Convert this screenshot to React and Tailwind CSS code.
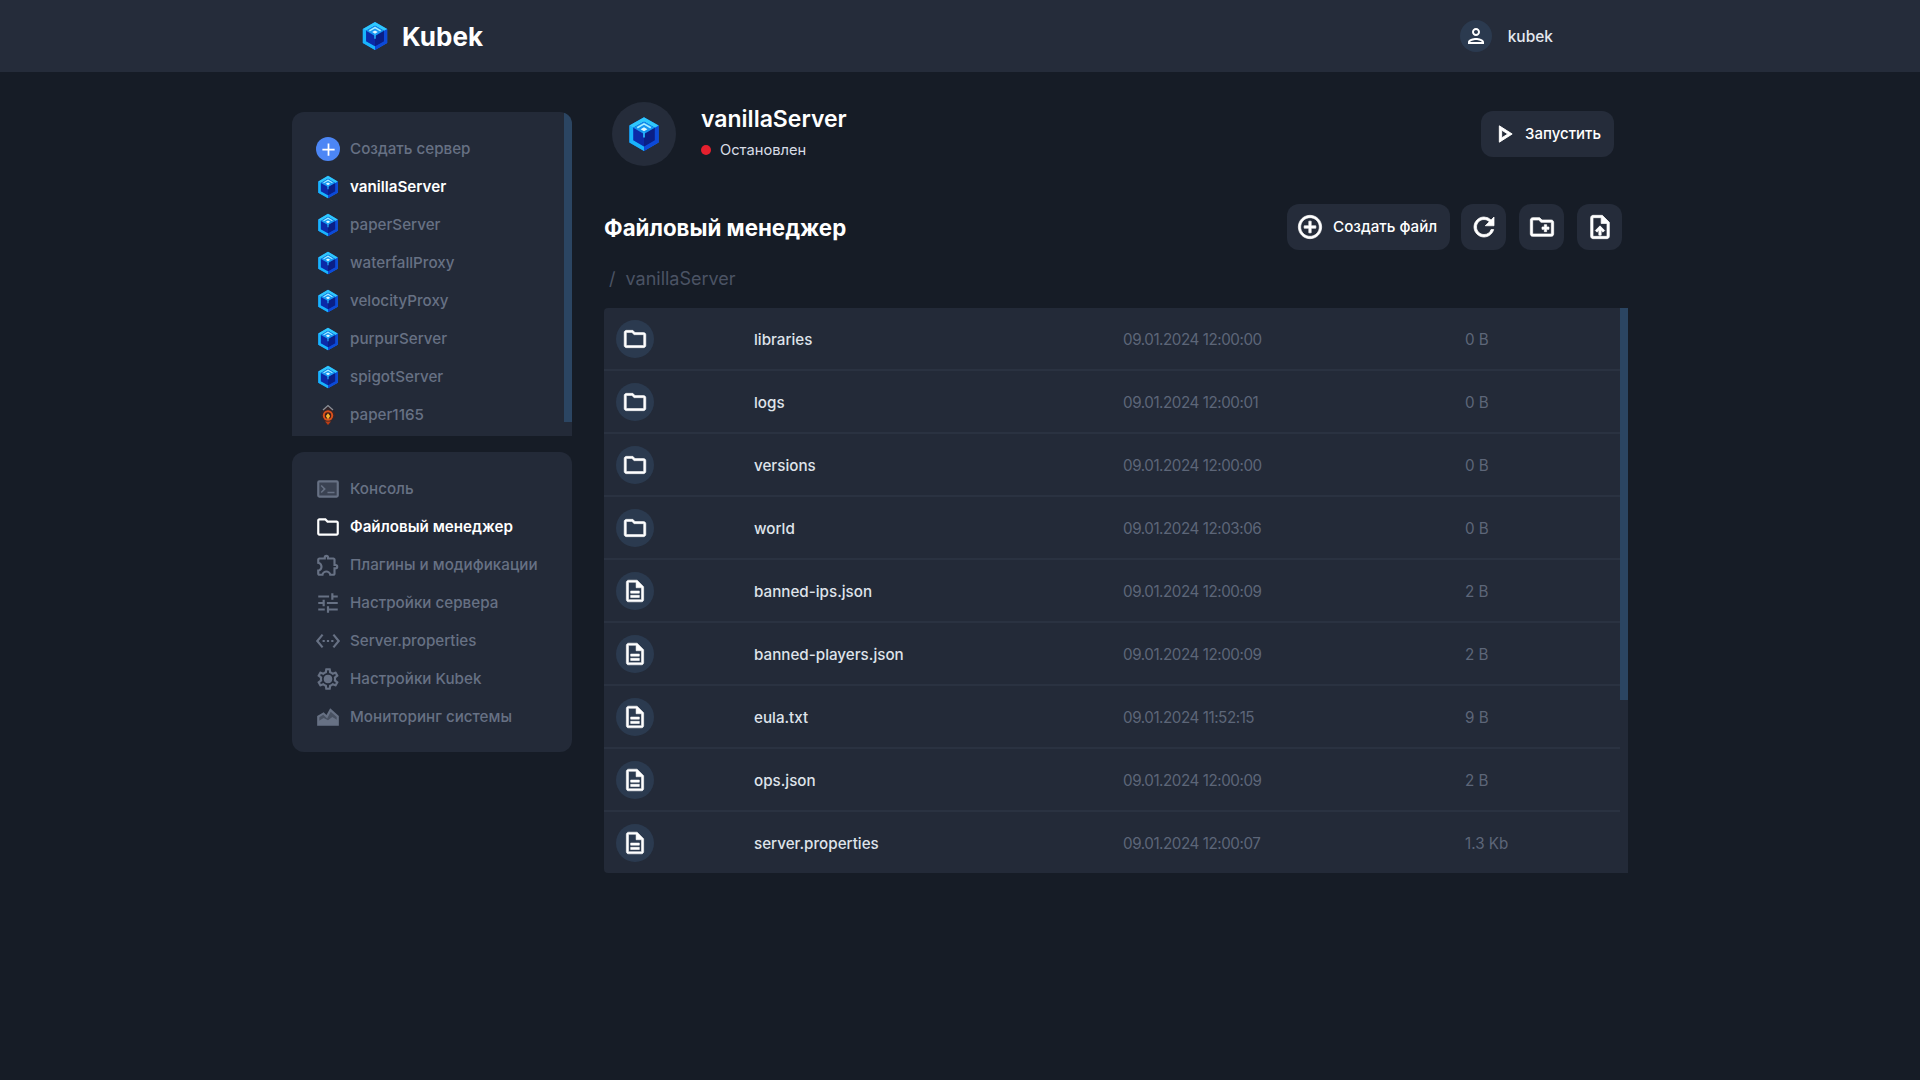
import {
  MdAdd, MdAddCircleOutline, MdOutlineCreateNewFolder, MdOutlineDescription, MdOutlineExtension, MdOutlineFolder,
  MdOutlinePerson, MdOutlinePlayArrow, MdOutlineSettings, MdOutlineUploadFile, MdRefresh, MdSettingsEthernet, MdTune,
} from 'react-icons/md';

const FONT = 'font-["Inter","Liberation_Sans",sans-serif]';
// thickens a material icon without outlining its empty 24x24 box path
const BOLD = '[&_path:first-child]:stroke-none';

const TerminalIcon = ({ size, className }) => (
  <svg width={size} height={size} viewBox="0 0 24 24" className={className} fill="currentColor">
    <path opacity="0.35" d="M3 5h18v14H3z" />
    <path d="M20 4H4a2 2 0 0 0-2 2v12a2 2 0 0 0 2 2h16a2 2 0 0 0 2-2V6a2 2 0 0 0-2-2Zm0 14H4V6h16v12Z" />
    <path d="m6.2 8.3-1 1 2.7 2.7-2.7 2.7 1 1 3.8-3.7Zm5.3 6.2H18V16h-6.5Z" />
  </svg>
);

const SettingsIcon = ({ size, className }) => (
  <span className={`relative inline-flex ${className}`}>
    <MdOutlineSettings size={size} />
    <span className="absolute left-[9px] top-[9px] h-2 w-2 rounded-full bg-current" />
  </span>
);

const MountainIcon = ({ size, className }) => (
  <svg width={size} height={size} viewBox="0 0 24 24" className={className} fill="currentColor">
    <path opacity="0.55" d="M3 18v-6l5-3 3 3 3-6 7 6v6Z" />
    <path d="M2 20V11l6-3.5 2.6 2.6L14 4l8 7v9Zm2-2h16v-6l-5.5-4.8-3.3 6.2L7.6 10 4 12.2Z" />
    <path d="M3 19v-3l5-3 4 2 4-3 5 3v4Z" />
  </svg>
);

const SERVERS = [
  { name: 'vanillaServer', active: true },
  { name: 'paperServer' },
  { name: 'waterfallProxy' },
  { name: 'velocityProxy' },
  { name: 'purpurServer' },
  { name: 'spigotServer' },
];

const MENU = [
  { label: 'Консоль', icon: TerminalIcon },
  { label: 'Файловый менеджер', icon: MdOutlineFolder, active: true },
  { label: 'Плагины и модификации', icon: MdOutlineExtension },
  { label: 'Настройки сервера', icon: MdTune },
  { label: 'Server.properties', icon: MdSettingsEthernet },
  { label: 'Настройки Kubek', icon: SettingsIcon },
  { label: 'Мониторинг системы', icon: MountainIcon },
];

const FILES = [
  { name: 'libraries', date: '09.01.2024 12:00:00', size: '0 B', dir: true },
  { name: 'logs', date: '09.01.2024 12:00:01', size: '0 B', dir: true },
  { name: 'versions', date: '09.01.2024 12:00:00', size: '0 B', dir: true },
  { name: 'world', date: '09.01.2024 12:03:06', size: '0 B', dir: true },
  { name: 'banned-ips.json', date: '09.01.2024 12:00:09', size: '2 B' },
  { name: 'banned-players.json', date: '09.01.2024 12:00:09', size: '2 B' },
  { name: 'eula.txt', date: '09.01.2024 11:52:15', size: '9 B' },
  { name: 'ops.json', date: '09.01.2024 12:00:09', size: '2 B' },
  { name: 'server.properties', date: '09.01.2024 12:00:07', size: '1.3 Kb' },
];

// hexagonal cube logo
function Cube({ size = 24 }) {
  return (
    <svg width={size} height={size} viewBox="0 0 32 32" className="shrink-0">
      <path d="M16 1 29 8.5V23.5L16 31 3 23.5V8.5Z" fill="#0f6ff0" />
      <path d="M3 8.5V23.5L16 31V27L6.5 21.5V10.5Z" fill="#19b4fb" />
      <path d="M29 8.5V23.5L16 31V27L25.5 21.5V10.5Z" fill="#0c49d8" />
      <path d="M16 1 29 8.5 25.5 10.5 16 5 6.5 10.5 3 8.5Z" fill="#2fc8fc" />
      <path d="M16 5 25.5 10.5V21.5L16 27 6.5 21.5V10.5Z" fill="#0b2aa8" />
      <path d="M16 16 25.5 10.5V21.5L16 27Z" fill="#0a1f86" />
      <path d="M16 5 25.5 10.5 16 16 6.5 10.5Z" fill="#1596f2" />
      <path d="M10 10.5 16 7 22 10.5" fill="none" stroke="#a8ecff" strokeWidth="1.5" />
      <path d="M13 11.8 16 10 19 11.8 16 13.6Z" fill="#e0f9ff" />
      <path d="M16 14v5" stroke="#27b5fa" strokeWidth="1.6" />
    </svg>
  );
}

function PaperIcon() {
  return (
    <svg width="24" height="24" viewBox="0 0 24 24" className="shrink-0">
      <path d="M12 3.5 18.5 8 19.5 14 12 22 4.5 14 5.5 8Z" fill="#33262b" />
      <path d="M7 7 12 2.5 17 7" fill="none" stroke="#8d8f96" strokeWidth="1.3" />
      <circle cx="12" cy="12.5" r="5.2" fill="#d9501b" />
      <circle cx="12" cy="12.5" r="3.2" fill="#3a1d1c" />
      <path d="M12 10.2 14.2 13 12 16.4 9.8 13Z" fill="#f9b42f" />
      <path d="M9 18.5h6L12 22Z" fill="#b93e16" />
    </svg>
  );
}

function SideRow({ icon, label, active }) {
  return (
    <div className="flex h-[38px] items-center pl-[23px]">
      <div className="flex w-[26px] shrink-0 justify-center">{icon}</div>
      <span className={`ml-[9px] text-[15.2px] ${active ? 'font-semibold text-white' : 'font-medium text-[#677184]'}`}>{label}</span>
    </div>
  );
}

function IconBtn({ icon: Icon, size = 28 }) {
  return (
    <button className="flex h-[46px] w-[45px] items-center justify-center rounded-xl bg-[#252c3a] text-white">
      <Icon size={size} stroke="currentColor" strokeWidth={0.6} className={BOLD} />
    </button>
  );
}

export default function App() {
  return (
    <div className={`min-h-screen bg-[#161c26] ${FONT}`}>
      <header className="flex h-[72px] items-center justify-between bg-[#252c3a] pl-[360px] pr-[367px]">
        <div className="flex items-center gap-[12px]">
          <Cube size={30} />
          <span className="text-[26px] font-bold text-white">Kubek</span>
        </div>
        <div className="flex items-center gap-4">
          <div className="flex h-8 w-8 items-center justify-center rounded-full bg-[#2b3a4f] text-white">
            <MdOutlinePerson size={24} />
          </div>
          <span className="pt-[2px] text-[15.5px] font-medium text-[#e4e8ef]">kubek</span>
        </div>
      </header>

      <div className="flex items-start pl-[292px] pt-[40px]">
        <aside className="w-[280px] shrink-0">
          <div className="relative h-[324px] overflow-hidden rounded-t-xl bg-[#232a38] pt-[18px]">
            <SideRow
              label="Создать сервер"
              icon={<span className="flex h-6 w-6 items-center justify-center rounded-full bg-[#4c86f5] text-white"><MdAdd size={21} /></span>}
            />
            {SERVERS.map(s => <SideRow key={s.name} label={s.name} active={s.active} icon={<Cube />} />)}
            <SideRow label="paper1165" icon={<PaperIcon />} />
            <div className="absolute right-0 top-0 h-[310px] w-2 bg-[#2b4562]" />
          </div>
          <div className="mt-4 h-[300px] rounded-xl bg-[#232a38] pt-[18px]">
            {MENU.map(m => (
              <SideRow
                key={m.label}
                label={m.label}
                active={m.active}
                icon={<m.icon size={26} className={m.active ? 'text-white' : 'text-[#677184]'} />}
              />
            ))}
          </div>
        </aside>

        <main className="ml-8 w-[1024px] -mt-[10px]">
          <div className="flex items-center justify-between pl-2 pr-[14px]">
            <div className="flex items-center">
              <div className="flex h-16 w-16 items-center justify-center rounded-full bg-[#252c3a]">
                <Cube size={36} />
              </div>
              <div className="ml-[25px] -mt-[3px]">
                <div className="text-[23px] leading-8 font-semibold text-white">vanillaServer</div>
                <div className="mt-[4px] flex items-center">
                  <span className="h-[10px] w-[10px] rounded-full bg-[#e5202e]" />
                  <span className="ml-[9px] text-[14.7px] text-[#d8dce5]">Остановлен</span>
                </div>
              </div>
            </div>
            <button className="flex h-[46px] w-[133px] items-center gap-[7px] rounded-xl bg-[#252c3a] pl-[9px] text-[15px] font-medium text-white">
              <MdOutlinePlayArrow size={28} stroke="currentColor" strokeWidth={0.8} className={BOLD} />
              Запустить
            </button>
          </div>

          <div className="mt-[38px] flex items-center justify-between pr-[6px]">
            <h1 className="pt-[1px] text-[22.3px] font-bold text-white">Файловый менеджер</h1>
            <div className="flex items-center gap-[13px]">
              <button className="-mr-[2px] flex h-[46px] w-[163px] items-center gap-[9px] rounded-xl bg-[#252c3a] pl-[9px] text-[15.2px] font-medium text-white">
                <MdAddCircleOutline size={28} stroke="currentColor" strokeWidth={0.6} className={BOLD} />
                Создать файл
              </button>
              <IconBtn icon={MdRefresh} size={30} />
              <IconBtn icon={MdOutlineCreateNewFolder} />
              <IconBtn icon={MdOutlineUploadFile} />
            </div>
          </div>

          <div className="mt-[14px] flex h-[28px] items-center pl-[5px] text-[18px] text-[#4b5364]">
            <span>/</span>
            <span className="ml-[10px]">vanillaServer</span>
          </div>

          <div className="relative mt-[16px] overflow-hidden rounded-l bg-[#232a38]">
            {FILES.map((f, i) => {
              const Icon = f.dir ? MdOutlineFolder : MdOutlineDescription;
              const last = i === FILES.length - 1;
              return (
                <div key={f.name} className={`mr-2 flex items-center pl-3 ${last ? 'h-[61px]' : 'h-[63px] border-b-2 border-[#2a3241]'}`}>
                  <div className="flex h-[38px] w-[38px] items-center justify-center rounded-full bg-[#2b3a4f] text-white">
                    <Icon size={26} stroke="currentColor" strokeWidth={0.5} className={BOLD} />
                  </div>
                  <span className="ml-[100px] w-[369px] pt-[4px] text-[15.2px] font-medium text-[#dfe3ea]">{f.name}</span>
                  <span className="w-[342px] pt-[4px] text-[15.2px] tracking-[-0.45px] text-[#5d6678]">{f.date}</span>
                  <span className="pt-[4px] text-[15.2px] text-[#5d6678]">{f.size}</span>
                </div>
              );
            })}
            <div className="absolute right-0 top-0 h-[392px] w-2 bg-[#2b4562]" />
          </div>
        </main>
      </div>
    </div>
  );
}
